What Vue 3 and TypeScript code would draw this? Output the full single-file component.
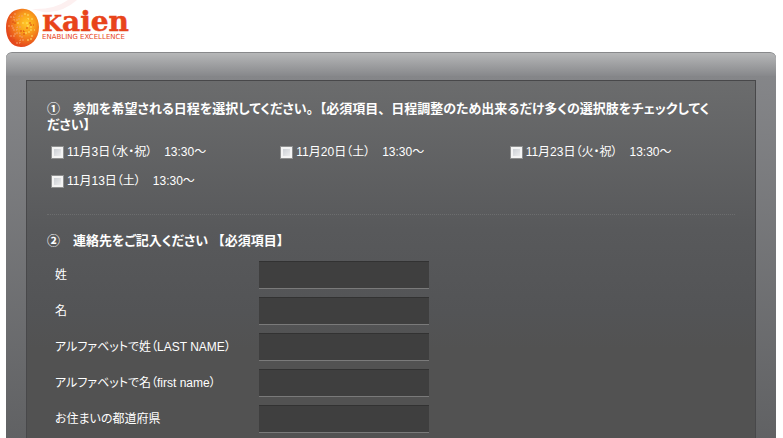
<script setup lang="ts">
import { ref } from 'vue'

interface Session {
  id: string
  label: string
}

interface Field {
  id: string
  label: string
}

const sessions: Session[] = [
  { id: 'nov03', label: '11月3日（水・祝）　13:30～' },
  { id: 'nov20', label: '11月20日（土）　13:30～' },
  { id: 'nov23', label: '11月23日（火・祝）　13:30～' },
  { id: 'nov13', label: '11月13日（土）　13:30～' },
]

const fields: Field[] = [
  { id: 'last', label: '姓' },
  { id: 'first', label: '名' },
  { id: 'last-roman', label: 'アルファベットで姓（LAST NAME）' },
  { id: 'first-roman', label: 'アルファベットで名（first name）' },
  { id: 'prefecture', label: 'お住まいの都道府県' },
]

const selected = ref<string[]>([])
const values = ref<Record<string, string>>({})
</script>

<template>
  <div class="page">
    <header class="header">
      <svg class="logo" width="140" height="52" viewBox="0 0 140 52" role="img" aria-label="Kaien">
        <defs>
          <radialGradient id="orb" cx="0.62" cy="0.38" r="0.62">
            <stop offset="0" stop-color="#ffc928" />
            <stop offset="0.4" stop-color="#f9a11c" />
            <stop offset="0.75" stop-color="#ee6a1c" />
            <stop offset="1" stop-color="#e4481c" />
          </radialGradient>
        </defs>
        <path d="M32 9 Q54 10 68 0 H77 Q61 14 43 12 Z" fill="#fdf0f0" />
        <path d="M20 9 C31 7 39 16 39 27 C39 39 31 47 21 47 C11 47 6 38 6 28 C6 17 11 10 20 9 Z" fill="url(#orb)" />
        <g fill="none" stroke-width="1">
          <path d="M10 17h4v3h5v-4h4 M8 26h5v4h4v-3h4 M10 36h5v-3h5v4h4 M16 43h4v-3h5 M15 13v3" stroke="#f6a06a" stroke-dasharray="2 1" />
          <path d="M24 14h4v5h5 M22 23h6v4h6 M25 33h4v-3h6 M27 40h4v-4h4 M18 22v4" stroke="#ffe06a" stroke-dasharray="2 2" />
          <path d="M12 22h3v3 M20 31h4v4 M30 22v3h4 M13 40h3 M26 28h3" stroke="#dc4b12" stroke-dasharray="2 1" />
        </g>
        <g fill="#e8441a">
          <text class="logo-name" x="42" y="31"><tspan class="logo-cap">K</tspan>aien</text>
          <text class="logo-tag" x="42" y="39">ENABLING EXCELLENCE</text>
        </g>
      </svg>
    </header>

    <main class="panel">
      <form class="sheet" @submit.prevent>
        <fieldset class="group dates">
          <legend class="title">①　参加を希望される日程を選択してください<span class="full">。</span>【必須項目<span class="full">、</span>日程調整のため出来るだけ多くの選択肢をチェックしてく<br />ださい】</legend>
          <div class="options">
            <label v-for="s in sessions" :key="s.id" class="option">
              <input v-model="selected" class="check" type="checkbox" :value="s.id" />
              <span>{{ s.label }}</span>
            </label>
          </div>
        </fieldset>

        <fieldset class="group">
          <legend class="title">②　連絡先をご記入ください <span class="full">【</span>必須項目】</legend>
          <div class="fields">
            <div v-for="f in fields" :key="f.id" class="field">
              <label :for="f.id">{{ f.label }}</label>
              <input :id="f.id" v-model="values[f.id]" class="box" type="text" />
            </div>
          </div>
        </fieldset>
      </form>
    </main>
  </div>
</template>

<style>
body {
  margin: 0;
  background: #fff;
}
</style>

<style scoped>
.page {
  display: flex;
  flex-direction: column;
  min-height: 100vh;
  font-family: "Liberation Sans", "Noto Sans CJK JP", sans-serif;
  font-size: 12px;
  line-height: 16px;
  color: #fff;
  font-feature-settings: "palt";
}

.header {
  height: 52px;
}

.logo {
  display: block;
}

.logo-name {
  font: bold 28px "DejaVu Serif", serif;
  stroke: #e8441a;
  stroke-width: 0.5px;
}

.logo-cap {
  font-size: 23px;
}

.logo-tag {
  font: 7px "DejaVu Sans", sans-serif;
}

.panel {
  flex: 1;
  display: flex;
  flex-direction: column;
  box-sizing: border-box;
  margin: 0 7px 0 6px;
  padding: 27px 20px 0;
  border-top: 1px solid #88898b;
  border-radius: 6px 6px 0 0;
  background:
    linear-gradient(#b6b7b8, #87888b) top / 100% 23px no-repeat,
    linear-gradient(#87888b, #5f6062);
}

.sheet {
  flex: 1;
  padding: 20px;
  border: 1px solid #48484a;
  border-bottom: 0;
  background: linear-gradient(#6b6c6d, #58595b 40%, #535456 62%, #525252 72%, #525252);
}

.group {
  min-width: 0;
  margin: 0;
  padding: 0;
  border: 0;
}

.dates {
  padding-bottom: 25px;
  margin-bottom: 18px;
  border-bottom: 1px dotted #6c6d6e;
}

.title {
  padding: 0;
  font-size: 13px;
  font-weight: bold;
}

/* Punctuation that keeps its full-width cell */
.full {
  font-feature-settings: normal;
  text-spacing-trim: space-all;
}

.options {
  display: grid;
  grid-template-columns: repeat(3, 1fr);
  row-gap: 13px;
  padding-top: 11px;
}

.option {
  display: flex;
  align-items: center;
  gap: 3px;
  padding-left: 4px;
  white-space: nowrap;
}

.check {
  appearance: none;
  box-sizing: border-box;
  width: 13px;
  height: 13px;
  margin: 0;
  border: 1px solid #8e8f8f;
  outline-offset: 1px;
  background: linear-gradient(135deg, #c3c7cd, #f6f6f6);
  box-shadow: inset 0 0 0 2px #f4f4f4;
}

.check:checked {
  background: #2c628b;
}

.fields {
  display: grid;
  gap: 8px;
  padding: 12px 0 0 8px;
}

.field {
  display: grid;
  grid-template-columns: 204px 170px;
  align-items: center;
}

.box {
  box-sizing: border-box;
  width: 100%;
  height: 28px;
  padding: 4px 6px;
  border: 0;
  border-top: 1px solid #323232;
  border-bottom: 1px solid #7a7a7a;
  border-radius: 0;
  background: #3f3f3f;
  color: #fff;
  font: inherit;
}
</style>
